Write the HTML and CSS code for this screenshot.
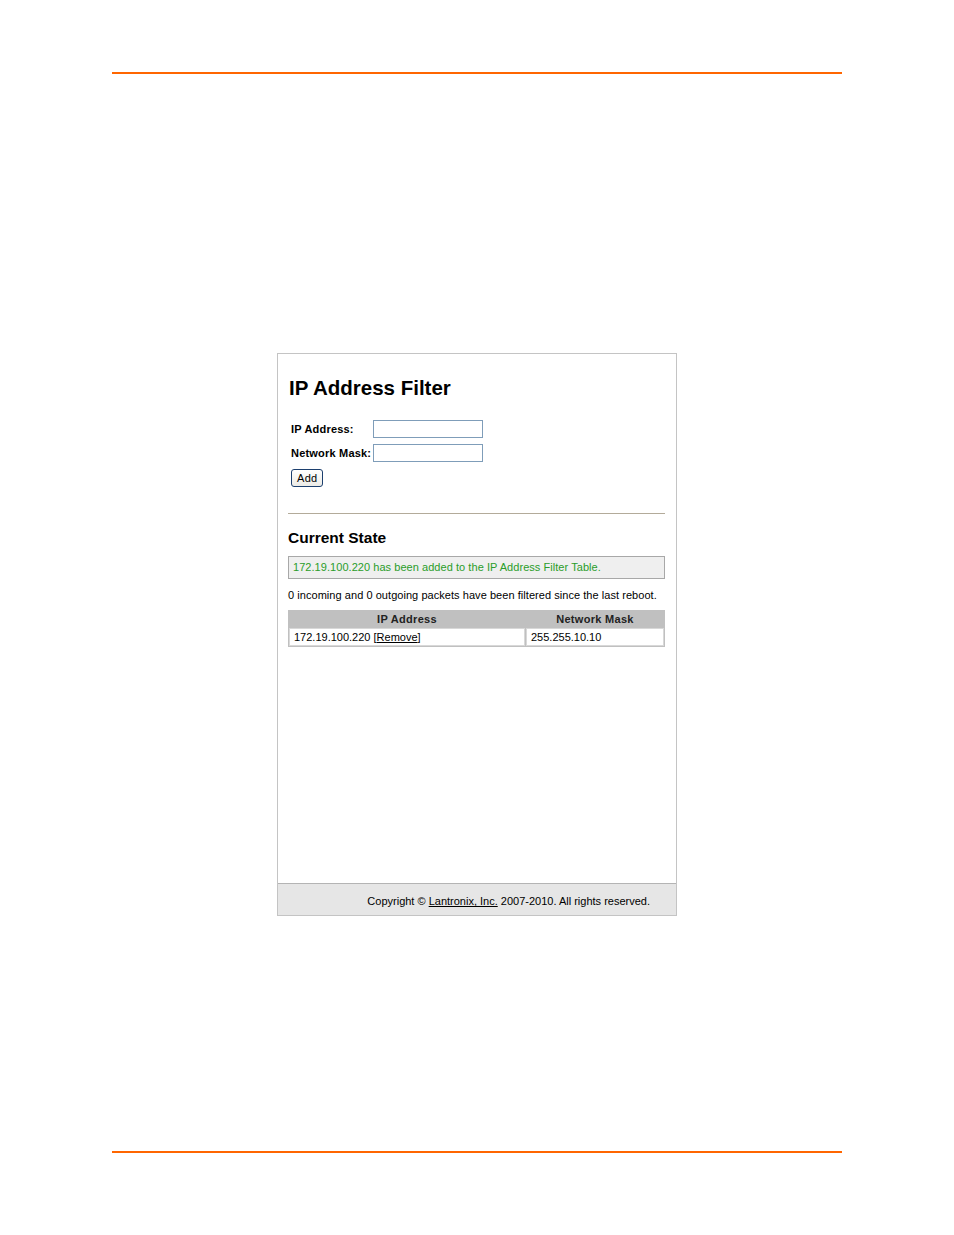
FILE: index.html
```html
<!DOCTYPE html>
<html>
<head>
<meta charset="utf-8">
<link rel="stylesheet" href="styles.css">
</head>
<body>
<div class="page">
  <div class="rule"></div>
  <div class="shot">
    <div class="content">
      <h1 class="title">IP Address Filter</h1>
      <div class="form">
        <div class="frow"><span class="label">IP Address:</span><span class="input"></span></div>
        <div class="frow"><span class="label">Network Mask:</span><span class="input"></span></div>
        <div class="frow"><span class="btn">Add</span></div>
      </div>
      <div class="hr"></div>
      <h2 class="sub">Current State</h2>
      <div class="msg">172.19.100.220 has been added to the IP Address Filter Table.</div>
      <p class="info">0 incoming and 0 outgoing packets have been filtered since the last reboot.</p>
      <table class="tbl">
        <tr><th class="c1">IP Address</th><th class="c2">Network Mask</th></tr>
        <tr><td class="c1">172.19.100.220 [<span class="link">Remove</span>]</td><td class="c2">255.255.10.10</td></tr>
      </table>
    </div>
    <div class="footer"><span>Copyright © <span class="link">Lantronix, Inc.</span> 2007-2010. All rights reserved.</span></div>
  </div>
  <div class="rule bottom"></div>
</div>
</body>
</html>
```
FILE: styles.css
```css
html, body { margin: 0; padding: 0; background: #fff; }
body { font-family: "Liberation Sans", Arial, sans-serif; color: #000; }
.page { width: 730px; margin: 0 auto; padding-top: 72px; }
.rule { height: 2px; background: #f60; }
.rule.bottom { margin-top: 235px; }
.shot {
  width: 398px; margin: 279px auto 0; border: 1px solid #c4c4c4;
  display: flex; flex-direction: column; height: 561px;
}
.content { flex: 1; padding: 22px 11px 0 10px; }
.title { font-size: 20.5px; font-weight: bold; margin: 0 0 0 1px; line-height: 24px; }
.form { margin-top: 20px; display: flex; flex-direction: column; gap: 6px; padding-left: 3px; }
.frow { display: flex; align-items: center; height: 18px; }
.label { width: 82px; font-size: 11px; font-weight: bold; letter-spacing: 0.2px; white-space: nowrap; }
.input { width: 108px; height: 16px; border: 1px solid #7f9db9; background: #fff; }
.btn {
  font-size: 11px; border: 1px solid #1c3f6e; border-radius: 3px; background: linear-gradient(#fff, #ecebe6);
  padding: 0 5px; height: 16px; line-height: 16px; letter-spacing: 0.3px; margin-top: 2px;
}
.hr { height: 1px; background: #b3ab9a; margin-top: 27px; }
.sub { font-size: 15.5px; font-weight: bold; margin: 14px 0 0; line-height: 20px; }
.msg {
  margin-top: 8px; border: 1px solid #a8a8a8; background: #efefef; color: #2a9d2a;
  font-size: 11px; letter-spacing: 0.05px; height: 21px; line-height: 21px; padding-left: 4px; white-space: nowrap;
}
.info { font-size: 11px; letter-spacing: 0.05px; margin: 9px 0 0; line-height: 14px; white-space: nowrap; }
.tbl { width: 377px; margin-top: 8px; border-collapse: separate; border-spacing: 1px; background: #c0c0c0; font-size: 11px; }
.tbl th { font-weight: bold; color: #222; height: 16px; padding: 0; line-height: 16px; letter-spacing: 0.3px; }
.tbl td { background: #fff; height: 16px; padding: 0 0 0 4px; letter-spacing: 0; border: 1px solid #d8d8d8; white-space: nowrap; }
.tbl .c1 { width: 230px; }
.link { text-decoration: underline; }
.footer {
  height: 32px; border-top: 1px solid #b4b4b4; background: #e6e6e6; font-size: 11px; letter-spacing: 0;
  display: flex; align-items: center; justify-content: flex-end; padding-right: 26px; padding-top: 3px; box-sizing: border-box;
}
```
